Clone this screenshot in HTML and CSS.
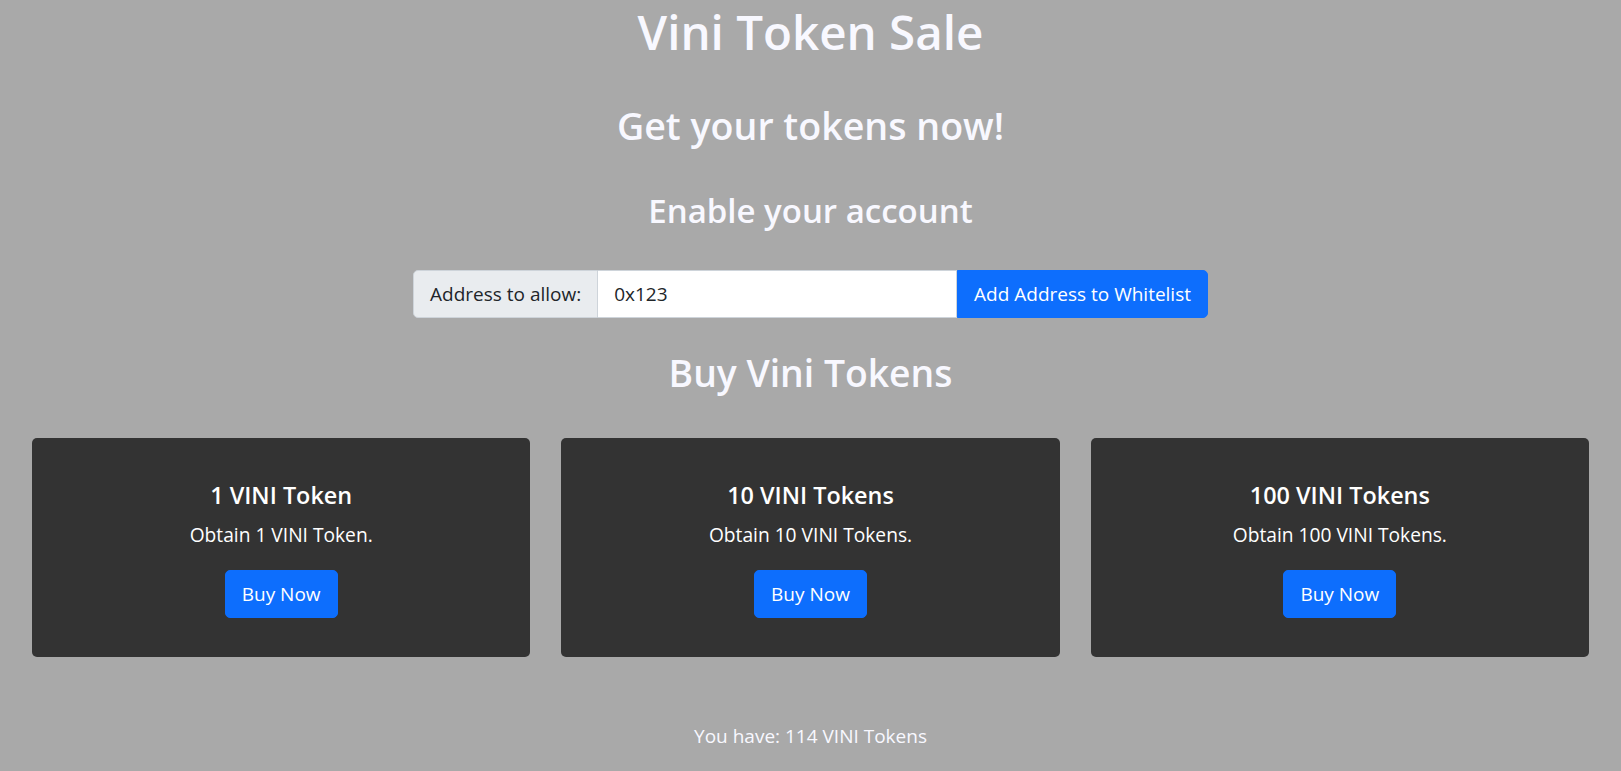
FILE: index.html
```html
<!DOCTYPE html>
<html lang="en">
<head>
<meta charset="utf-8">
<title>Vini Token Sale</title>
<link rel="stylesheet" href="styles.css">
</head>
<body>
<div class="app">
  <h1 class="title">Vini Token Sale</h1>
  <h2 class="subtitle">Get your tokens now!</h2>
  <h3 class="section">Enable your account</h3>
  <div class="input-group">
    <span class="input-label">Address to allow:</span>
    <input class="input-field" type="text" value="0x123">
    <button class="btn btn-wide">Add Address to Whitelist</button>
  </div>
  <h2 class="buy-title">Buy Vini Tokens</h2>
  <div class="cards">
    <div class="card">
      <h4 class="card-title">1 VINI Token</h4>
      <p class="card-text">Obtain 1 VINI Token.</p>
      <button class="btn">Buy Now</button>
    </div>
    <div class="card">
      <h4 class="card-title">10 VINI Tokens</h4>
      <p class="card-text">Obtain 10 VINI Tokens.</p>
      <button class="btn">Buy Now</button>
    </div>
    <div class="card">
      <h4 class="card-title">100 VINI Tokens</h4>
      <p class="card-text">Obtain 100 VINI Tokens.</p>
      <button class="btn">Buy Now</button>
    </div>
  </div>
  <p class="balance">You have: 114 VINI Tokens</p>
</div>
</body>
</html>
```

FILE: styles.css
```css
* { box-sizing: border-box; }
html, body { margin: 0; padding: 0; }
body {
  background: #a9a9a9;
  font-family: "Open Sans", "Noto Sans", sans-serif;
  color: #f8f8ff;
  font-size: 16px;
}
.app {
  display: flex;
  flex-direction: column;
  align-items: center;
  height: 771px;
  overflow: hidden;
}
h1, h2, h3, h4 { margin: 0; font-weight: 600; line-height: 1.2; }
.title { font-size: 47.5px; margin-top: 3px; }
.subtitle { font-size: 37.6px; margin-top: 43px; }
.section { font-size: 33px; margin-top: 43px; }
.input-group {
  display: flex;
  width: 795px;
  height: 48px;
  margin-top: 39px;
}
.input-label {
  display: flex;
  align-items: center;
  padding: 0 16px;
  background: #e9ecef;
  color: #212529;
  border: 1px solid #ced4da;
  border-radius: 5px 0 0 5px;
  font-size: 19px;
  white-space: nowrap;
}
.input-field {
  flex: 1;
  min-width: 0;
  border: 1px solid #ced4da;
  border-left: 0;
  padding: 0 16px;
  font-family: inherit;
  font-size: 19px;
  color: #212529;
  background: #fff;
}
.btn {
  font-family: inherit;
  font-size: 19px;
  color: #fff;
  background: #0d6efd;
  border: 1px solid #0d6efd;
  border-radius: 5px;
  padding: 0 16px;
  height: 48px;
}
.btn-wide { border-radius: 0 5px 5px 0; }
.buy-title { font-size: 37.3px; margin-top: 33px; }
.cards {
  display: grid;
  grid-template-columns: repeat(3, 1fr);
  gap: 31px;
  width: 100%;
  padding: 0 32px;
  margin-top: 43px;
}
.card {
  background: #333;
  border-radius: 5px;
  height: 219px;
  display: flex;
  flex-direction: column;
  align-items: center;
  padding-top: 43px;
  color: #fff;
}
.card-title { font-size: 23.4px; line-height: 28px; }
.card-text { font-size: 19.2px; line-height: 28.8px; margin: 12px 0 20px; }
.balance { font-size: 19px; line-height: 28.5px; margin: 65px 0 0; }
```
